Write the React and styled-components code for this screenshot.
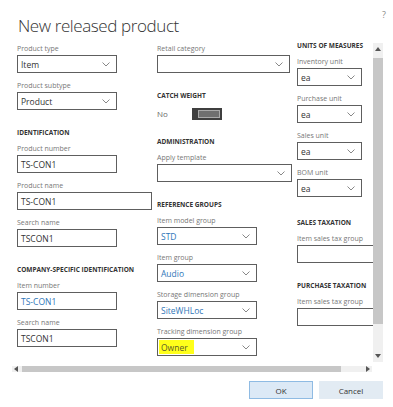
import styled, { createGlobalStyle } from "styled-components";

const GlobalStyle = createGlobalStyle`
  html, body {
    margin: 0;
    padding: 0;
    background: #ffffff;
  }
`;

const Dialog = styled.div`
  width: 393px;
  height: 407px;
  display: flex;
  flex-direction: column;
  background: #ffffff;
  font-family: "Segoe UI", "Open Sans", "Noto Sans", sans-serif;
  overflow: hidden;
`;

const TitleBar = styled.div`
  height: 40px;
  box-sizing: border-box;
  display: flex;
  justify-content: space-between;
  align-items: flex-start;
  padding: 14px 7px 0 18px;
`;

const Title = styled.h1`
  margin: 0;
  font-weight: 300;
  font-size: 17px;
  line-height: 24px;
  letter-spacing: -0.4px;
  color: #333333;
`;

const Help = styled.span`
  margin-top: -6px;
  font-size: 9px;
  color: #8a8a8a;
`;

const ScrollArea = styled.div`
  display: flex;
  align-items: flex-start;
`;

const Viewport = styled.div`
  width: 361px;
  height: 323px;
  margin-left: 12px;
  box-sizing: border-box;
  padding-left: 5px;
  display: flex;
  overflow: hidden;
`;

const Column = styled.div`
  flex: 0 0 ${(p) => p.$width}px;
  padding-top: ${(p) => p.$top}px;
  display: flex;
  flex-direction: column;
`;

const Header = styled.div`
  margin-top: ${(p) => p.$top ?? 10}px;
  margin-bottom: 5px;
  font-size: 6.5px;
  line-height: 11px;
  font-weight: 700;
  color: #333333;
  text-transform: uppercase;
  white-space: nowrap;

  &:first-child {
    margin-top: 0;
  }
`;

const FieldWrap = styled.div`
  display: flex;
  flex-direction: column;
  margin-bottom: 7px;
`;

const Label = styled.div`
  font-size: 7px;
  line-height: 11px;
  margin-bottom: 1px;
  color: #777777;
  white-space: nowrap;
`;

const Box = styled.div`
  width: ${(p) => p.$width}px;
  height: 18px;
  flex-shrink: 0;
  box-sizing: border-box;
  border: 1px solid #5e5e5e;
  display: flex;
  align-items: stretch;
  justify-content: space-between;
  padding: 1px 6px 1px 3px;
`;

const Value = styled.span`
  display: flex;
  align-items: center;
  font-size: 8.5px;
  color: ${(p) => (p.$tone === "link" ? "#2f76b8" : "#333333")};
  background: ${(p) => (p.$highlight ? "#ffff1a" : "transparent")};
  margin-left: ${(p) => (p.$highlight ? -2 : 0)}px;
  padding: 0 ${(p) => (p.$highlight ? 6 : 0)}px 0 ${(p) => (p.$highlight ? 2 : 0)}px;
  ${(p) => p.$highlight && "color: #5a5a2a;"}
`;

const ChevronIcon = styled.svg`
  align-self: center;
  flex-shrink: 0;
`;

const Chevron = () => (
  <ChevronIcon width="8" height="5" viewBox="0 0 8 5">
    <polyline points="0.5,0.5 4,4 7.5,0.5" fill="none" stroke="#7a7a7a" strokeWidth="0.9" />
  </ChevronIcon>
);

const ToggleRow = styled.div`
  height: 22px;
  margin-bottom: 5px;
  display: flex;
  align-items: center;
  font-size: 8px;
  color: #6a6a6a;

  > span {
    width: 35px;
  }
`;

const Toggle = styled.div`
  width: 30px;
  height: 12px;
  box-sizing: border-box;
  background: #3f3f3f;
  padding: 2px 2px 2px 6px;

  > div {
    height: 100%;
    box-sizing: border-box;
    background: #6f6f6f;
    border: 1px solid #a9a9a9;
  }
`;

const VScroll = styled.div`
  width: 10px;
  height: 319px;
  margin-top: 3px;
  background: #f0f0f0;
  display: flex;
  flex-direction: column;
  align-items: center;
`;

const ArrowCell = styled.div`
  flex: 0 0 12px;
  width: 100%;
  display: flex;
  align-items: center;
  justify-content: center;
`;

const VThumb = styled.div`
  width: 100%;
  height: 266px;
  margin-top: 3px;
  background: #c7c7c7;
`;

const Spacer = styled.div`
  flex: 1;
`;

const HScroll = styled.div`
  width: 360px;
  height: 6px;
  margin: 3px 0 0 12px;
  background: #f0f0f0;
  display: flex;
  align-items: center;
`;

const HArrow = styled.div`
  flex: 0 0 8px;
  height: 100%;
  display: flex;
  align-items: center;
  justify-content: center;
`;

const HThumb = styled.div`
  width: 319px;
  height: 100%;
  margin-left: 2px;
  background: #c7c7c7;
`;

const Arrow = ({ dir }) => {
  const pts = {
    up: "0,4 3,0 6,4",
    down: "0,0 3,4 6,0",
    left: "4,0 0,3 4,6",
    right: "0,0 4,3 0,6",
  }[dir];
  const horiz = dir === "left" || dir === "right";
  return (
    <svg width={horiz ? 4 : 6} height={horiz ? 6 : 4} viewBox={horiz ? "0 0 4 6" : "0 0 6 4"}>
      <polygon points={pts} fill="#555555" />
    </svg>
  );
};

const Footer = styled.div`
  display: flex;
  justify-content: flex-end;
  gap: 6px;
  margin-top: 9px;
  padding-right: 10px;
`;

const Button = styled.button`
  width: 64px;
  height: 18px;
  box-sizing: border-box;
  font-family: inherit;
  font-size: 8px;
  color: #333333;
  padding: 0;
  border: 1px solid ${(p) => (p.$primary ? "#8fbbe3" : "#e2ebf3")};
  background: ${(p) => (p.$primary ? "#dce9f6" : "#e2ebf3")};
`;

const Field = ({ label, width = 100, value, tone, select = true, highlight }) => (
  <FieldWrap>
    <Label>{label}</Label>
    <Box $width={width}>
      <Value $tone={tone} $highlight={highlight}>
        {value}
      </Value>
      {select && <Chevron />}
    </Box>
  </FieldWrap>
);

export default function App() {
  return (
    <>
      <GlobalStyle />
      <Dialog>
        <TitleBar>
          <Title>New released product</Title>
          <Help>?</Help>
        </TitleBar>

        <ScrollArea>
          <Viewport>
            <Column $width={140} $top={3}>
              <Field label="Product type" value="Item" />
              <Field label="Product subtype" value="Product" />
              <Header>Identification</Header>
              <Field label="Product number" value="TS-CON1" select={false} />
              <Field label="Product name" value="TS-CON1" width={135} select={false} />
              <Field label="Search name" value="TSCON1" select={false} />
              <Header>Company-specific identification</Header>
              <Field label="Item number" value="TS-CON1" tone="link" select={false} />
              <Field label="Search name" value="TSCON1" select={false} />
            </Column>

            <Column $width={140} $top={3}>
              <Field label="Retail category" width={133} />
              <Header>Catch weight</Header>
              <ToggleRow>
                <span>No</span>
                <Toggle>
                  <div />
                </Toggle>
              </ToggleRow>
              <Header>Administration</Header>
              <Field label="Apply template" width={135} />
              <Header>Reference groups</Header>
              <Field label="Item model group" value="STD" tone="link" />
              <Field label="Item group" value="Audio" tone="link" />
              <Field label="Storage dimension group" value="SiteWHLoc" tone="link" />
              <Field label="Tracking dimension group" value="Owner" highlight />
            </Column>

            <Column $width={100} $top={0}>
              <Header>Units of measures</Header>
              <Field label="Inventory unit" value="ea" width={65} />
              <Field label="Purchase unit" value="ea" width={65} />
              <Field label="Sales unit" value="ea" width={65} />
              <Field label="BOM unit" value="ea" width={65} />
              <Header $top={13}>Sales taxation</Header>
              <Field label="Item sales tax group" width={100} select={false} />
              <Header>Purchase taxation</Header>
              <Field label="Item sales tax group" width={100} select={false} />
            </Column>
          </Viewport>

          <VScroll>
            <ArrowCell>
              <Arrow dir="up" />
            </ArrowCell>
            <VThumb />
            <Spacer />
            <ArrowCell>
              <Arrow dir="down" />
            </ArrowCell>
          </VScroll>
        </ScrollArea>

        <HScroll>
          <HArrow>
            <Arrow dir="left" />
          </HArrow>
          <HThumb />
          <Spacer />
          <HArrow>
            <Arrow dir="right" />
          </HArrow>
        </HScroll>

        <Footer>
          <Button $primary>OK</Button>
          <Button>Cancel</Button>
        </Footer>
      </Dialog>
    </>
  );
}
